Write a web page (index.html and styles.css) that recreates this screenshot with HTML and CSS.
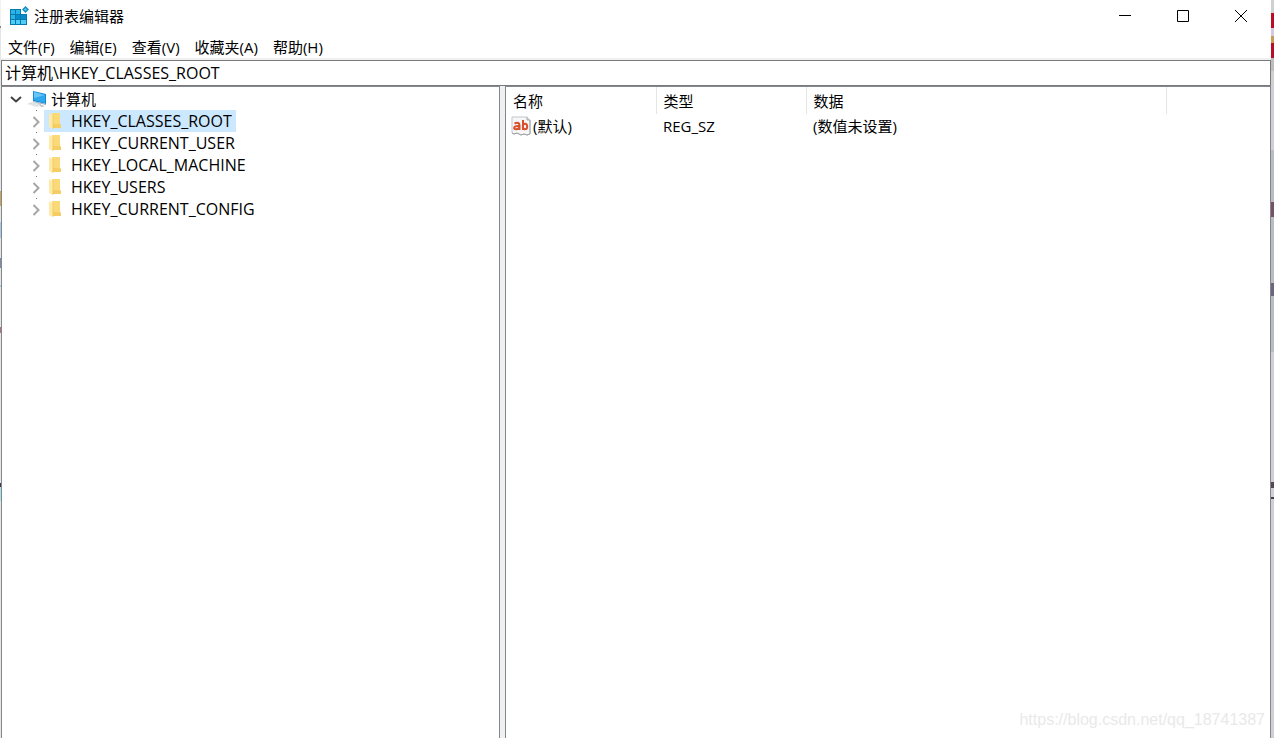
FILE: index.html
```html
<!DOCTYPE html>
<html lang="zh-CN">
<head>
<meta charset="utf-8">
<title>注册表编辑器</title>
<link rel="stylesheet" href="styles.css">
</head>
<body>
<svg class="defs" width="0" height="0" aria-hidden="true">
  <symbol id="folder" viewBox="0 0 14 16">
    <path d="M4 0h8v11l1 1v3H4z" fill="#f6cd63"/>
    <path d="M4 0h8v11H4z" fill="#f9d978"/>
    <path d="M1 0l4 2v14l-4-2z" fill="#ffe9a6"/>
    <path d="M5 2v14" stroke="#efc557" stroke-width=".7"/>
  </symbol>
  <symbol id="chevron" viewBox="0 0 10 14">
    <path d="M2.500 2l5 5-5 5" fill="none" stroke="#a6a6a6" stroke-width="2"/>
  </symbol>
</svg>
<div class="edge edge-left"></div>
<div class="window">
  <header class="titlebar">
    <svg class="app-icon" viewBox="0 0 20 20" aria-hidden="true">
      <path d="M1 3h17v16H1z" fill="#0878ad"/>
      <path d="M2 4h4v4H2zM7 4h4v4H7zM2 9h4v4H2z" fill="#26b4ea"/>
      <path d="M7 9h4v4H7zM12 9h5v4h-5z" fill="#078dcc"/>
      <path d="M2 14h4v4H2zM7 14h4v4H7zM12 14h5v4h-5z" fill="#50cdf4"/>
      <path d="M12 0h8v8h-8z" fill="#fff"/>
      <path d="M16.500 0l3.500 3.500-3.500 3.500-3.500-3.500z" fill="#158cc1"/>
      <path d="M16.500 2l1.500 1.500-1.500 1.500-1.500-1.500z" fill="#5bcaf0"/>
    </svg>
    <h1 class="title">注册表编辑器</h1>
    <div class="controls">
      <button class="control" aria-label="最小化"><svg viewBox="0 0 12 12"><path d="M0 5.500h12"/></svg></button>
      <button class="control" aria-label="最大化"><svg viewBox="0 0 12 12"><path d="M.5.5h11v11H.5z"/></svg></button>
      <button class="control" aria-label="关闭"><svg viewBox="0 0 12 12"><path d="M0 0l12 12M12 0L0 12"/></svg></button>
    </div>
  </header>
  <nav class="menubar">
    <button class="menu">文件(F)</button>
    <button class="menu">编辑(E)</button>
    <button class="menu">查看(V)</button>
    <button class="menu">收藏夹(A)</button>
    <button class="menu">帮助(H)</button>
  </nav>
  <input class="address" type="text" aria-label="地址" value="计算机\HKEY_CLASSES_ROOT">
  <main class="panes">
    <section class="tree">
      <div class="root">
        <button class="toggle root-toggle" aria-label="折叠"><svg viewBox="0 0 14 10"><path d="M2 3l5 4.500 5-4.500" fill="none" stroke="#404040" stroke-width="2"/></svg></button>
        <svg class="computer" viewBox="0 0 20 18" aria-hidden="true">
          <path d="M6 1l13 3v10L6 11z" fill="#1789d2"/>
          <path d="M7 2l11 3v8L7 10z" fill="#2fa8ef"/>
          <path d="M7 2l11 3-11 3z" fill="#69c5f8"/>
          <path d="M6 11l13 3v1L6 12z" fill="#9eb2c2"/>
          <path d="M11 13l3 1v1l4 1-3 1-5-2z" fill="#b7bdc3"/>
          <path d="M0 14l5-2 10 3-5 2z" fill="#d3d7dc"/>
          <path d="M2 14l9 2.500M4 13l9 2.500" stroke="#fff" stroke-width=".5"/>
        </svg>
        <span>计算机</span>
      </div>
      <ul class="keys">
        <li class="key"><button class="toggle" aria-label="展开"><svg><use href="#chevron"/></svg></button><a class="node selected" href="#"><svg><use href="#folder"/></svg>HKEY_CLASSES_ROOT</a></li>
        <li class="key"><button class="toggle" aria-label="展开"><svg><use href="#chevron"/></svg></button><a class="node" href="#"><svg><use href="#folder"/></svg>HKEY_CURRENT_USER</a></li>
        <li class="key"><button class="toggle" aria-label="展开"><svg><use href="#chevron"/></svg></button><a class="node" href="#"><svg><use href="#folder"/></svg>HKEY_LOCAL_MACHINE</a></li>
        <li class="key"><button class="toggle" aria-label="展开"><svg><use href="#chevron"/></svg></button><a class="node" href="#"><svg><use href="#folder"/></svg>HKEY_USERS</a></li>
        <li class="key"><button class="toggle" aria-label="展开"><svg><use href="#chevron"/></svg></button><a class="node" href="#"><svg><use href="#folder"/></svg>HKEY_CURRENT_CONFIG</a></li>
      </ul>
    </section>
    <div class="splitter"></div>
    <section class="values">
      <table class="list">
        <colgroup><col class="col-name"><col class="col-type"><col class="col-data"><col></colgroup>
        <thead><tr><th>名称</th><th>类型</th><th>数据</th><td></td></tr></thead>
        <tbody><tr>
          <td><div class="value-name">
            <svg class="value-icon" viewBox="0 0 20 20" aria-hidden="true">
              <path d="M1 1h15l3 3v14l-3 1-3-1-3 1-4-2-3 1-2-1z" fill="#f7f7f7" stroke="#c2c5c8"/>
              <path d="M16 1v3h3" fill="#ddd" stroke="#a9adb1"/>
              <path d="M1 17l2 1 3-1 4 2 3-1 3 1 3-1V4" fill="none" stroke="#9da1a6"/>
              <g fill="none" stroke="#d9512c" stroke-width="2"><path d="M3.500 7.500c3-1.500 5-.5 5 1.500v5M8.500 10c-7-.5-6 3.500-3.500 3.200 2 0 3.500-1.200 3.500-3.200M12 4v10"/><ellipse cx="14" cy="10.500" rx="2.200" ry="2.800"/></g>
            </svg>
            <span>(默认)</span></div></td>
          <td>REG_SZ</td><td>(数值未设置)</td><td></td>
        </tr></tbody>
      </table>
      <div class="watermark">https://blog.csdn.net/qq_18741387</div>
    </section>
  </main>
</div>
<div class="edge edge-right"></div>
</body>
</html>
```
FILE: styles.css
```css
* { box-sizing: border-box; }

body {
  display: flex;
  height: 100vh;
  margin: 0;
  overflow: hidden;
  background: #fff;
  color: #000;
  font: 15px/22px "Open Sans", "Noto Sans CJK SC", sans-serif;
}

button { padding: 0; border: 0; background: none; color: inherit; font: inherit; }

.defs { position: absolute; }

.edge { flex: none; background-color: #e6e6e6; }

.edge-left {
  width: 1px;
  background-image: linear-gradient(#f2f2f2 26px, #888 26px 28px, #e6e6e6 28px 191px, #cda555 191px 206px, #e6e6e6 206px 222px, #a9cbe8 222px 238px, #e6e6e6 238px 258px, #7f8da2 258px 268px, #e6e6e6 268px 285px, #a3cbe4 285px 287px, #e6e6e6 287px 327px, #b77178 327px 333px, #e6e6e6 333px 483px, #43384d 483px 487px, #a7e4e5 487px 501px, #e6e6e6 501px);
}

.edge-right {
  width: 3px;
  background-image: linear-gradient(#d0d0d0 13px, #b70e25 13px 28px, #d8c8de 28px 36px, #c99b54 36px 43px, #b70e25 43px 58px, #bdbdbd 58px 71px, #d0d0d0 71px 150px, #b9bdc1 150px 202px, #765266 202px 217px, #b9bdc1 217px 283px, #6b6679 283px 296px, #b9bdc1 296px 352px, #d0d0d0 352px 482px, #54494c 482px 488px, #d0d0d0 488px 497px, #444 497px 499px, #d0d0d0 499px);
}

.window { display: flex; flex: 1; flex-direction: column; min-width: 0; }

.titlebar { display: flex; align-items: center; height: 32px; padding-left: 8px; }
.app-icon { width: 20px; height: 20px; }
.title { margin: 0 auto 0 5px; font-size: 15px; font-weight: 400; }
.controls { display: flex; padding-right: 1px; }
.control { display: grid; place-items: center; width: 58px; height: 32px; }
.control svg { width: 12px; height: 12px; fill: none; stroke: #000; overflow: visible; }

.menubar { display: flex; gap: 15px; height: 28px; padding: 4px 7px 0; border-bottom: 2px solid #f0f0f0; }
.menu { height: 22px; white-space: nowrap; }

.address {
  width: 100%;
  height: 26px;
  padding: 0 3px 2px;
  border: 1px solid #7a7a7a;
  border-radius: 0;
  outline: 0;
  background: #fff;
  color: #000;
  font: inherit;
  font-size: 16px;
}

.panes { display: flex; flex: 1; min-height: 0; }

.tree { flex: none; width: 499px; padding: 1px 0 0 6px; border: solid #828790; border-width: 1px 1px 0; }
.root { display: flex; align-items: center; height: 22px; }
.toggle { display: grid; place-items: center; flex: none; width: 16px; height: 22px; }
.toggle svg { width: 10px; height: 14px; }
.keys .toggle { padding-top: 2px; }
.root-toggle svg { width: 14px; height: 10px; }
.computer { width: 20px; height: 18px; margin: 0 4px 0 3px; }

.keys {
  margin: 0;
  padding: 0 0 0 20px;
  list-style: none;
}
.key {
  display: flex;
  height: 22px;
  background: linear-gradient(#777, #777) 8px 0 / 1px 1px no-repeat;
}
.node { display: flex; align-items: center; gap: 8px; padding: 0 4px; color: inherit; font-size: 16px; text-decoration: none; }
.node svg { width: 14px; height: 16px; margin-right: 1px; }
.node.selected { background: #cce8ff; }

.splitter { flex: none; width: 5px; background: #f0f0f0; }

.values { position: relative; flex: 1; min-width: 0; border: solid #828790; border-width: 1px 1px 0; }
.list { width: 100%; border-collapse: collapse; table-layout: fixed; }
.col-name { width: 150px; }
.col-type { width: 150px; }
.col-data { width: 360px; }
.list th, .list td { padding: 0 7px; font-weight: 400; text-align: left; white-space: nowrap; }
.list th { height: 27px; border-right: 1px solid #e5e5e5; }
.list tbody td { height: 24px; }
.value-name { display: flex; align-items: center; gap: 2px; margin-left: -2px; }
.value-icon { width: 20px; height: 20px; }

.watermark {
  position: absolute;
  right: 5px;
  bottom: 7px;
  color: #e9e9e9;
  font: 16px/22px "Liberation Sans", Arial, sans-serif;
}
```
